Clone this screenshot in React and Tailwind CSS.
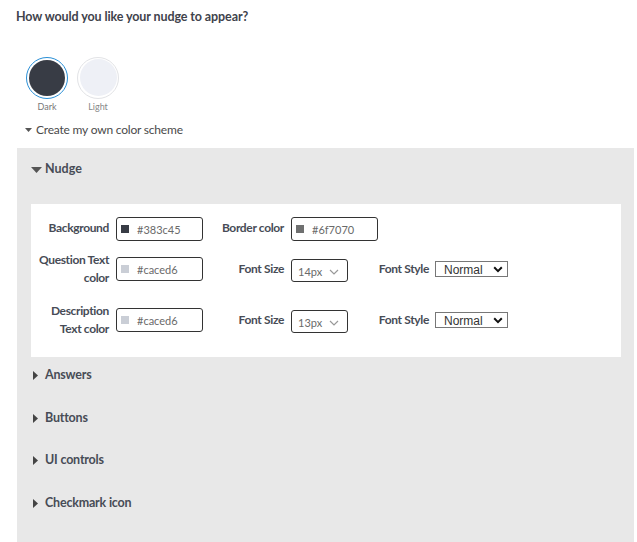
import React from "react";

const font = { fontFamily: '"Source Sans Pro", Lato, "Noto Sans", sans-serif' };

function Chevron({ className = "" }) {
  return (
    <svg width="10" height="6" viewBox="0 0 10 6" className={className}>
      <path d="M1 1l4 4 4-4" fill="none" stroke="currentColor" strokeWidth="1.2" />
    </svg>
  );
}

function BoldChevron() {
  return (
    <svg width="10" height="7" viewBox="0 0 10 7">
      <path d="M1.2 1.3l3.8 3.8 3.8-3.8" fill="none" stroke="#111" strokeWidth="2" />
    </svg>
  );
}

function ColorInput({ color, value }) {
  return (
    <div className="flex h-[24px] w-[87px] items-center rounded-[3px] border border-[#333] bg-white pl-[4px]">
      <span className="h-[8px] w-[8px]" style={{ backgroundColor: color }} />
      <span className="ml-[8px] mt-[2px] text-[11px] text-[#6a6a6a]">{value}</span>
    </div>
  );
}

function SizeSelect({ value }) {
  return (
    <div className="flex h-[23px] w-[57px] items-center rounded-[3px] border border-[#333] bg-white pl-[6px]">
      <span className="mt-[3px] text-[11px] text-[#6a6a6a]">{value}</span>
      <Chevron className="ml-[7px] mt-[2px] text-[#999]" />
    </div>
  );
}

function StyleSelect() {
  return (
    <div className="flex h-[16px] w-[73px] items-center justify-between border border-[#777] bg-white pl-[8px] pr-[4px]">
      <span className="mt-[1px] text-[12px] leading-none text-[#333]" style={{ fontFamily: '"Liberation Sans", Arial, sans-serif' }}>Normal</span>
      <BoldChevron />
    </div>
  );
}

function Label({ children, w }) {
  return (
    <div className={`text-right text-[12px] font-bold leading-[18px] tracking-[-0.35px] text-[#474c56] ${w}`}>{children}</div>
  );
}

function Collapsed({ title }) {
  return (
    <div className="flex h-[42.5px] items-center pl-[16px]">
      <svg width="5" height="9" viewBox="0 0 5 9" className="mr-[7px]">
        <path d="M0 0l5 4.5L0 9z" fill="#444" />
      </svg>
      <span className="text-[12.5px] font-bold tracking-[-0.2px] text-[#474c56]">{title}</span>
    </div>
  );
}

export default function App() {
  return (
    <div className="h-[542px] w-[637px] overflow-hidden bg-white" style={font}>
      <div className="pl-[16px] pt-[8px] text-[12.5px] font-bold tracking-[-0.1px] text-[#3f434c]">How would you like your nudge to appear?</div>

      <div className="ml-[26px] mt-[30px] flex gap-[9px]">
        <div className="flex w-[42px] flex-col items-center">
          <div className="flex h-[42px] w-[42px] items-center justify-center rounded-full border-[1.5px] border-[#2a8fd6] bg-white">
            <div className="h-[36px] w-[36px] rounded-full bg-[#383c45]" />
          </div>
          <div className="mt-[1px] text-[9px] text-[#777]">Dark</div>
        </div>
        <div className="flex w-[42px] flex-col items-center">
          <div className="flex h-[42px] w-[42px] items-center justify-center rounded-full border border-[#e2e3e6] bg-white">
            <div className="h-[37px] w-[37px] rounded-full bg-[#eef0f6]" />
          </div>
          <div className="mt-[1px] text-[9px] text-[#888]">Light</div>
        </div>
      </div>

      <div className="ml-[25px] mt-[8px] flex items-center">
        <svg width="7" height="4" viewBox="0 0 7 4" className="mr-[4px]">
          <path d="M0 0h7L3.5 4z" fill="#555" />
        </svg>
        <span className="text-[12px] tracking-[-0.2px] text-[#4a4a4a]">Create my own color scheme</span>
      </div>

      <div className="ml-[17px] mt-[9px] h-[400px] w-[617px] bg-[#e8e8e8] pt-[11px]">
        <div className="flex h-[20px] items-center pl-[14px]">
          <svg width="11" height="6" viewBox="0 0 11 6" className="mr-[3px] mt-[2px]">
            <path d="M0 0h11L5.5 6z" fill="#555" />
          </svg>
          <span className="text-[12.5px] font-bold text-[#474c56]">Nudge</span>
        </div>

        <div className="ml-[14px] mt-[25px] h-[153px] w-[590px] bg-white pt-[13px]">
          <div className="flex items-center">
            <Label w="w-[78px] -mt-[3px]">Background</Label>
            <div className="ml-[7px]"><ColorInput color="#383c45" value="#383c45" /></div>
            <Label w="w-[81px] -mt-[3px]">Border color</Label>
            <div className="ml-[7px]"><ColorInput color="#6f7070" value="#6f7070" /></div>
          </div>

          <div className="mt-[10px] flex items-center">
            <Label w="w-[78px]">Question Text<br />color</Label>
            <div className="ml-[7px]"><ColorInput color="#caced6" value="#caced6" /></div>
            <Label w="w-[81px]">Font Size</Label>
            <div className="ml-[7px] mt-[3px]"><SizeSelect value="14px" /></div>
            <Label w="w-[81px]">Font Style</Label>
            <div className="ml-[6px]"><StyleSelect /></div>
          </div>

          <div className="mt-[15px] flex items-center">
            <Label w="w-[78px]">Description<br />Text color</Label>
            <div className="ml-[7px]"><ColorInput color="#caced6" value="#caced6" /></div>
            <Label w="w-[81px]">Font Size</Label>
            <div className="ml-[7px] mt-[3px]"><SizeSelect value="13px" /></div>
            <Label w="w-[81px]">Font Style</Label>
            <div className="ml-[6px]"><StyleSelect /></div>
          </div>
        </div>

        <div className="mt-[-3px]">
          <Collapsed title="Answers" />
          <Collapsed title="Buttons" />
          <Collapsed title="UI controls" />
          <Collapsed title="Checkmark icon" />
        </div>
      </div>
    </div>
  );
}
